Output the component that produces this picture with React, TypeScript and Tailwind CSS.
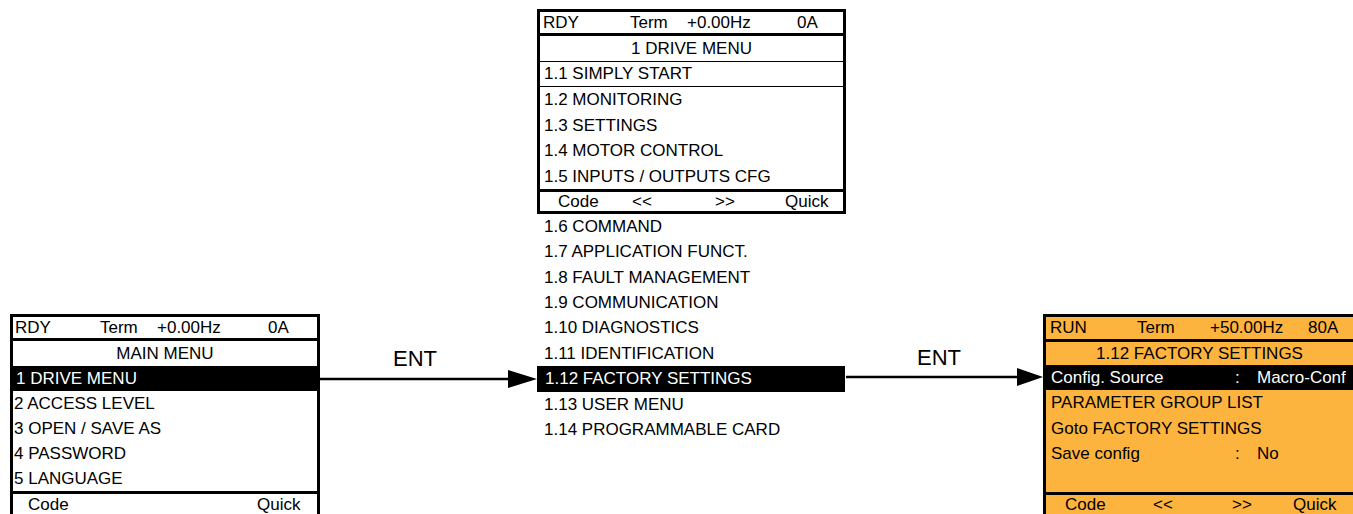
import React from "react";

const SUB_ITEMS = [
  "1.6 COMMAND",
  "1.7 APPLICATION FUNCT.",
  "1.8 FAULT MANAGEMENT",
  "1.9 COMMUNICATION",
  "1.10 DIAGNOSTICS",
  "1.11 IDENTIFICATION"
];

function Arrow({ width, lineEnd }: { width: number; lineEnd: number }) {
  return (
    <svg width={width} height={24} viewBox={`0 0 ${width} 24`} className="block">
      <line x1={0} y1={12} x2={lineEnd + 2} y2={12} stroke="#000" strokeWidth={2.6} />
      <polygon points={`${lineEnd},3 ${width},12 ${lineEnd},21`} fill="#000" />
    </svg>
  );
}

export default function App() {
  return (
    <div className="w-[1353px] h-[514px] overflow-hidden bg-white flex items-start text-black text-[17px] font-['Liberation_Sans',Arial,sans-serif]">
      {/* ── Main menu ── */}
      <div className="mt-[314px] ml-[10px] w-[310px] shrink-0 border-[3px] border-black bg-white">
        <div className="flex h-[21px] items-center pl-[2px] whitespace-nowrap">
          <span className="w-[85px]">RDY</span>
          <span className="w-[57px]">Term</span>
          <span className="w-[111px]">+0.00Hz</span>
          <span>0A</span>
        </div>
        <div className="h-[29px] border-t-[3px] border-b border-black text-center leading-[25px]">
          MAIN MENU
        </div>
        <div className="h-[24px] bg-black text-white pl-[3px] leading-[24px]">1 DRIVE MENU</div>
        {["2 ACCESS LEVEL", "3 OPEN / SAVE AS", "4 PASSWORD", "5 LANGUAGE"].map((t) => (
          <div key={t} className="h-[25px] pl-[1px] leading-[25px]">
            {t}
          </div>
        ))}
        <div className="flex h-[26px] border-t-[3px] border-black pl-[15px] leading-[21px]">
          <span className="w-[229px]">Code</span>
          <span>Quick</span>
        </div>
      </div>

      {/* ── ENT arrow 1 ── */}
      <div className="mt-[347px] w-[217px] shrink-0 flex flex-col">
        <div className="h-[24px] pl-[73px] text-[22px] leading-[24px]">ENT</div>
        <div className="-mt-[4px]">
          <Arrow width={217} lineEnd={188} />
        </div>
      </div>

      {/* ── Drive menu ── */}
      <div className="mt-[9px] w-[309px] shrink-0 flex flex-col">
        <div className="border-[3px] border-black bg-white">
          <div className="flex h-[21px] items-center pl-[3px] whitespace-nowrap">
            <span className="w-[87px]">RDY</span>
            <span className="w-[57px]">Term</span>
            <span className="w-[110px]">+0.00Hz</span>
            <span>0A</span>
          </div>
          <div className="h-[29px] border-t-[3px] border-b border-black text-center leading-[25px]">
            1 DRIVE MENU
          </div>
          <div className="h-[25px] border-b border-black pl-[4px] leading-[24px]">1.1 SIMPLY START</div>
          {["1.2 MONITORING", "1.3 SETTINGS", "1.4 MOTOR CONTROL", "1.5 INPUTS / OUTPUTS CFG"].map((t) => (
            <div key={t} className="h-[25.5px] pl-[4px] leading-[25.5px] whitespace-nowrap">
              {t}
            </div>
          ))}
          <div className="flex h-[22px] border-t-[3px] border-black pl-[18px] leading-[19px]">
            <span className="w-[74px]">Code</span>
            <span className="w-[83px]">&lt;&lt;</span>
            <span className="w-[70px]">&gt;&gt;</span>
            <span>Quick</span>
          </div>
        </div>
        {SUB_ITEMS.map((t) => (
          <div key={t} className="h-[25.33px] pl-[7px] leading-[25.33px]">
            {t}
          </div>
        ))}
        <div className="h-[25.7px] w-[308px] bg-black text-white pl-[8px] leading-[25.7px]">
          1.12 FACTORY SETTINGS
        </div>
        <div className="h-[25.33px] pl-[7px] leading-[25.33px]">1.13 USER MENU</div>
        <div className="h-[25.33px] pl-[7px] leading-[25.33px]">1.14 PROGRAMMABLE CARD</div>
      </div>

      {/* ── ENT arrow 2 ── */}
      <div className="mt-[346px] w-[197px] shrink-0 flex flex-col">
        <div className="h-[24px] pl-[71px] text-[22px] leading-[24px]">ENT</div>
        <div className="-mt-[5px]">
          <Arrow width={197} lineEnd={171} />
        </div>
      </div>

      {/* ── Factory settings ── */}
      <div className="mt-[314px] w-[313px] shrink-0 border-[3px] border-black bg-[#fdb43e]">
        <div className="flex h-[22px] items-center pl-[4px] whitespace-nowrap">
          <span className="w-[87px]">RUN</span>
          <span className="w-[73px]">Term</span>
          <span className="w-[98px]">+50.00Hz</span>
          <span>80A</span>
        </div>
        <div className="h-[26px] border-t-[3px] border-black text-center leading-[23px]">
          1.12 FACTORY SETTINGS
        </div>
        <div className="flex h-[25px] bg-black text-white pl-[5px] leading-[25px] whitespace-nowrap">
          <span className="w-[184px]">Config. Source</span>
          <span className="w-[22px]">:</span>
          <span>Macro-Conf</span>
        </div>
        <div className="h-[25.5px] pl-[5px] leading-[25.5px]">PARAMETER GROUP LIST</div>
        <div className="h-[25.5px] pl-[5px] leading-[25.5px]">Goto FACTORY SETTINGS</div>
        <div className="flex h-[25.5px] pl-[5px] leading-[25.5px]">
          <span className="w-[184px]">Save config</span>
          <span className="w-[22px]">:</span>
          <span>No</span>
        </div>
        <div className="h-[25.5px]" />
        <div className="flex h-[26px] border-t-[3px] border-black pl-[19px] leading-[19px]">
          <span className="w-[88px]">Code</span>
          <span className="w-[79px]">&lt;&lt;</span>
          <span className="w-[61px]">&gt;&gt;</span>
          <span>Quick</span>
        </div>
      </div>
    </div>
  );
}
